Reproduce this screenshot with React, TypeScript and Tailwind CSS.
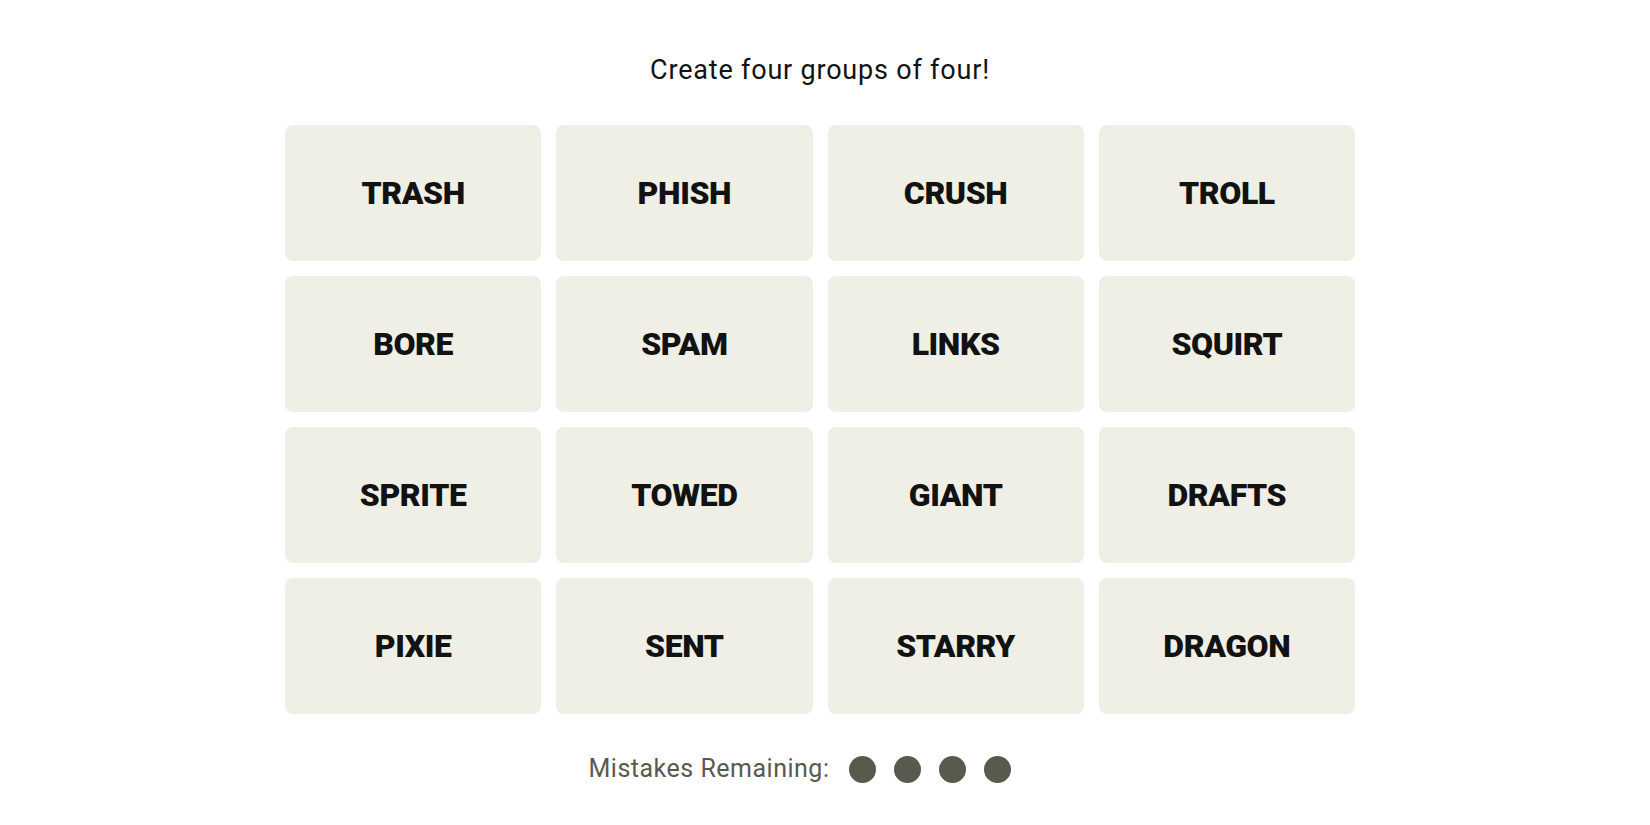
import React from "react";

const words = [
  "TRASH", "PHISH", "CRUSH", "TROLL",
  "BORE", "SPAM", "LINKS", "SQUIRT",
  "SPRITE", "TOWED", "GIANT", "DRAFTS",
  "PIXIE", "SENT", "STARRY", "DRAGON",
];

export default function App() {
  return (
    <div className="min-h-[825px] w-full bg-white flex flex-col items-center pr-[10px] font-['Roboto','Liberation_Sans',sans-serif]">
      <p className="mt-[54px] text-[27px] leading-[32px] text-[#121212] font-normal tracking-[0.8px]">
        Create four groups of four!
      </p>
      <div className="mt-[39px] grid grid-cols-4 gap-[15px] w-[1070px]">
        {words.map((w) => (
          <div
            key={w}
            className="h-[136px] rounded-[8px] bg-[#efefe6] flex items-center justify-center"
          >
            <span className="text-[32px] font-black text-[#121212] tracking-[-0.4px]">{w}</span>
          </div>
        ))}
      </div>
      <div className="mt-[41px] mr-[40px] flex items-center h-[28px]">
        <span className="text-[25px] font-normal text-[#5a594e] tracking-[0.5px] mr-[20px]">Mistakes Remaining:</span>
        <div className="flex items-center gap-[18px]">
          {[0, 1, 2, 3].map((i) => (
            <span key={i} className="block w-[27px] h-[27px] rounded-full bg-[#5a594e]" />
          ))}
        </div>
      </div>
    </div>
  );
}
